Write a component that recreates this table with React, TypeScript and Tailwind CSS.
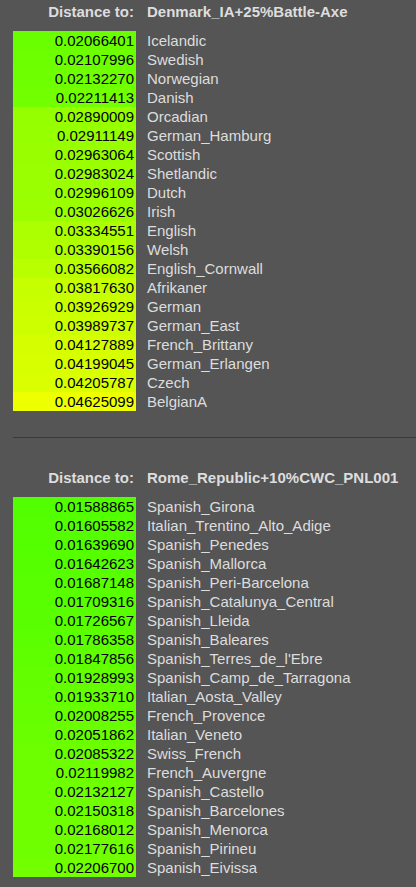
import React from "react";

type Row = [string, string];

const t1: Row[] = [
  ["0.02066401", "Icelandic"],
  ["0.02107996", "Swedish"],
  ["0.02132270", "Norwegian"],
  ["0.02211413", "Danish"],
  ["0.02890009", "Orcadian"],
  ["0.02911149", "German_Hamburg"],
  ["0.02963064", "Scottish"],
  ["0.02983024", "Shetlandic"],
  ["0.02996109", "Dutch"],
  ["0.03026626", "Irish"],
  ["0.03334551", "English"],
  ["0.03390156", "Welsh"],
  ["0.03566082", "English_Cornwall"],
  ["0.03817630", "Afrikaner"],
  ["0.03926929", "German"],
  ["0.03989737", "German_East"],
  ["0.04127889", "French_Brittany"],
  ["0.04199045", "German_Erlangen"],
  ["0.04205787", "Czech"],
  ["0.04625099", "BelgianA"],
];

const t2: Row[] = [
  ["0.01588865", "Spanish_Girona"],
  ["0.01605582", "Italian_Trentino_Alto_Adige"],
  ["0.01639690", "Spanish_Penedes"],
  ["0.01642623", "Spanish_Mallorca"],
  ["0.01687148", "Spanish_Peri-Barcelona"],
  ["0.01709316", "Spanish_Catalunya_Central"],
  ["0.01726567", "Spanish_Lleida"],
  ["0.01786358", "Spanish_Baleares"],
  ["0.01847856", "Spanish_Terres_de_l'Ebre"],
  ["0.01928993", "Spanish_Camp_de_Tarragona"],
  ["0.01933710", "Italian_Aosta_Valley"],
  ["0.02008255", "French_Provence"],
  ["0.02051862", "Italian_Veneto"],
  ["0.02085322", "Swiss_French"],
  ["0.02119982", "French_Auvergne"],
  ["0.02132127", "Spanish_Castello"],
  ["0.02150318", "Spanish_Barcelones"],
  ["0.02168012", "Spanish_Menorca"],
  ["0.02177616", "Spanish_Pirineu"],
  ["0.02206700", "Spanish_Eivissa"],
];

function color(v: string) {
  const r = Math.max(0, Math.min(255, Math.round(parseFloat(v) * 5150)));
  return `rgb(${r},255,0)`;
}

function Section({ target, rows }: { target: string; rows: Row[] }) {
  return (
    <div>
      <div className="flex h-[19px] items-center font-bold text-[#dddddd]">
        <div className="w-[123px] pr-[2px] text-right">Distance to:</div>
        <div className="ml-[11px] whitespace-nowrap">{target}</div>
      </div>
      <div className="mt-[10px]">
        {rows.map(([v, n]) => (
          <div key={n} className="flex h-[19px] items-center">
            <div
              className="flex h-full w-[123px] items-center justify-end pr-[2px] text-black"
              style={{ backgroundColor: color(v) }}
            >
              {v}
            </div>
            <div className="ml-[11px] whitespace-nowrap text-[#dddddd]">{n}</div>
          </div>
        ))}
      </div>
    </div>
  );
}

export default function App() {
  return (
    <div
      className="min-h-screen w-[416px] bg-[#555555] pl-[13px] pt-[2px] text-[15px] leading-[19px]"
      style={{ fontFamily: '"Liberation Sans", Arial, sans-serif' }}
    >
      <Section target="Denmark_IA+25%Battle-Axe" rows={t1} />
      <div className="mt-[26px] h-px bg-[#3a3a3a]" />
      <div className="pt-[30px]">
        <Section target="Rome_Republic+10%CWC_PNL001" rows={t2} />
      </div>
    </div>
  );
}
